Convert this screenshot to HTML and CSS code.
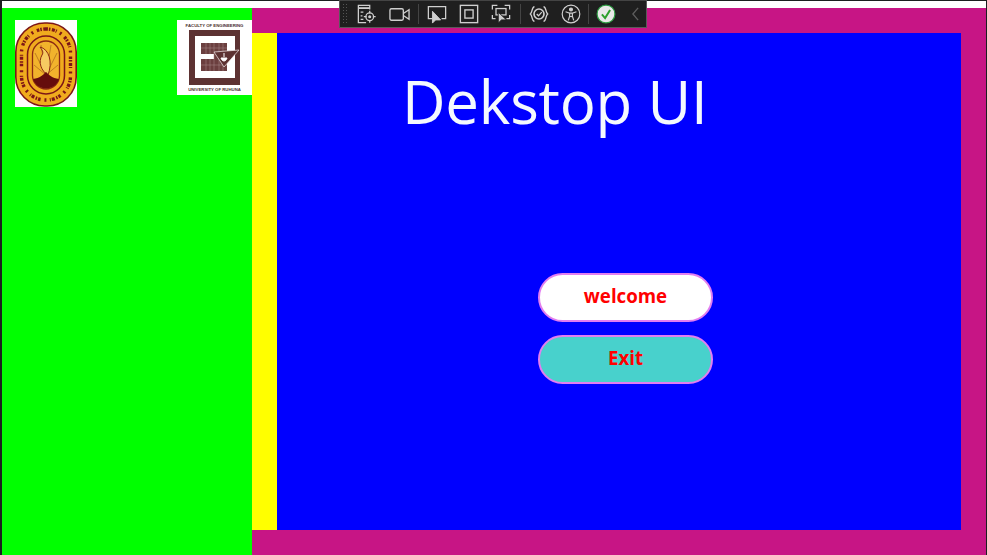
FILE: index.html
```html
<!DOCTYPE html>
<html lang="en">
<head>
<meta charset="utf-8">
<title>Dekstop UI</title>
<link rel="stylesheet" href="styles.css">
</head>
<body>
<div class="window">
  <div class="titlebar"></div>
  <div class="content">
    <aside class="sidebar">
      <svg class="logo seal" width="62" height="87" viewBox="0 0 62 87">
        <rect width="62" height="87" fill="#fff"/>
        <rect x="0.8" y="3" width="60.4" height="83" rx="29" fill="#f0ab1e" stroke="#7d1616" stroke-width="1.600"/>
        <rect x="6.500" y="9" width="49" height="71" rx="24" fill="none" stroke="#7d1616" stroke-width="3.400" stroke-dasharray="2.500 1 1.500 1.500 3 1 1 3.500 2 4"/>
        <rect x="12.500" y="16" width="37" height="58" rx="18.500" fill="#f0ab1e" stroke="#7d1616" stroke-width="1.500"/>
        <rect x="17.500" y="21" width="27" height="48" rx="13.500" fill="#f2b32c" stroke="#8d2a12" stroke-width="1.300"/>
        <path d="M31 55L20 33M31 55L26 25M31 55L36 25M31 55L42 33M31 55L19 45M31 55L43 45" stroke="#a8641b" stroke-width=".7" fill="none"/>
        <path d="M25 27C34 29 38 42 33 55C26 51 23 42 27 35C29 32 27 30 25 27Z" fill="#f6cb62" stroke="#8d2a12" stroke-width="1"/>
        <path d="M18 59C25 58 28 55 31 52C34 55 37 58 44 59C42 65 37 68.500 31 68.500C25 68.500 20 65 18 59Z" fill="#650c0c"/>
      </svg>
      <svg class="logo faculty" width="75" height="75" viewBox="0 0 75 75">
        <rect width="75" height="75" fill="#fff"/>
        <text x="37.500" y="7" class="logo-text">FACULTY OF ENGINEERING</text>
        <rect x="12" y="10" width="51" height="55" fill="#5d3232"/>
        <rect x="18" y="16" width="40" height="42" fill="#fff"/>
        <path d="M24 23H50V51H24V39H37V34H24Z" fill="#6b3f3f"/>
        <path d="M29 23V34M33 23V34M29 39V51M33 39V51M37 23V51M42 23V51M46 23V51M24 28H50M24 45H50" stroke="#a98a8a" stroke-width=".5"/>
        <path d="M37 32L62 30L47 47Z" fill="#5d3232" stroke="#f3e9e9" stroke-width=".7"/>
        <path d="M47 33V37M44 38C45 42 49 42 50 38Z" stroke="#fff" fill="#fff" stroke-width="1"/>
        <text x="37.500" y="71" class="logo-text">UNIVERSITY OF RUHUNA</text>
      </svg>
    </aside>
    <main class="stage">
      <div class="strip"></div>
      <section class="panel">
        <h1 class="title">Dekstop UI</h1>
        <div class="actions">
          <button class="pill pill-welcome" type="button">welcome</button>
          <button class="pill pill-exit" type="button">Exit</button>
        </div>
      </section>
    </main>
  </div>
</div>
<div class="devbar">
  <svg class="grip" width="6" height="22" viewBox="0 0 6 22"><path d="M1 1h1v1H1zM4 1h1v1H4zM1 4h1v1H1zM4 4h1v1H4zM1 7h1v1H1zM4 7h1v1H4zM1 10h1v1H1zM4 10h1v1H4zM1 13h1v1H1zM4 13h1v1H4zM1 16h1v1H1zM4 16h1v1H4zM1 19h1v1H1zM4 19h1v1H4z" fill="#555"/></svg>
  <svg class="ico first" viewBox="0 0 22 22" fill="none" stroke="#cfcfcf" stroke-width="1.400"><path d="M10 20.500H1.500V1.500H14V6"/><path d="M1.500 4.500H14" stroke-width="2"/><path d="M4 9h3M4 13h2M4 17h3"/><circle cx="14" cy="14" r="4.200"/><circle cx="14" cy="14" r="1" fill="#cfcfcf"/><path d="M14 7.500v3M14 17.500v3M7.500 14h3M17.500 14h3"/></svg>
  <svg class="ico cam" viewBox="0 0 22 22" fill="none" stroke="#cfcfcf" stroke-width="1.400"><rect x="1" y="5" width="14" height="12" rx="1.500"/><path d="M15 10l6-4v10l-6-4"/></svg>
  <span class="sep sep-a"></span>
  <svg class="ico after-sep" viewBox="0 0 22 22" fill="none" stroke="#cfcfcf" stroke-width="1.400"><path d="M6 16H1.500V3H20.500V16H16"/><path d="M6 8V21L9.500 17.500L15 17.500Z" fill="#cfcfcf" stroke="#cfcfcf" stroke-width="1"/></svg>
  <svg class="ico mid" viewBox="0 0 22 22" fill="none" stroke="#cfcfcf" stroke-width="1.500"><rect x="1.500" y="1.500" width="19" height="19"/><rect x="6.500" y="6.500" width="9" height="9"/></svg>
  <svg class="ico mid" viewBox="0 0 22 22" fill="none" stroke="#cfcfcf" stroke-width="1.400"><path d="M1.500 6V1.500H7M15 1.500H20.500V6M1.500 12V16H5M17 16H20.500V12"/><rect x="5.500" y="5" width="11" height="7"/><path d="M8 9V21L11.500 17.500L17 17.500Z" fill="#cfcfcf" stroke="#1f1f1f" stroke-width="1"/></svg>
  <span class="sep sep-b"></span>
  <svg class="ico after-sep" viewBox="0 0 22 22" fill="none" stroke="#cfcfcf" stroke-width="1.500"><path d="M6 3C3 3 4 9 1.500 11C4 13 3 19 6 19M16 3C19 3 18 9 20.500 11C18 13 19 19 16 19"/><circle cx="11" cy="11" r="5.500" stroke-width="1.800"/><path d="M8.500 11l2 2 3.500-4" stroke-width="1.400"/></svg>
  <svg class="ico mid" viewBox="0 0 22 22" fill="none" stroke="#cfcfcf" stroke-width="1.300"><circle cx="11" cy="11" r="9.700"/><circle cx="11" cy="6" r="1.600" fill="#cfcfcf"/><path d="M5 8.500L9.500 10V13.500L8 18M17 8.500L12.500 10V13.500L14 18M9.500 10H12.500V13.500L11 14L9.500 13.500" stroke-width="1.300"/></svg>
  <span class="sep sep-c"></span>
  <svg class="ico check" viewBox="0 0 22 22"><circle cx="11" cy="11" r="9.800" fill="#e9e9e9" stroke="#2f9e44" stroke-width="1.300"/><path d="M6.500 11.500L10 15.500L15.500 6.500" fill="none" stroke="#2ca02c" stroke-width="2.200"/></svg>
  <svg class="chev" width="7" height="16" viewBox="0 0 8 16" fill="none" stroke="#5e5e5e" stroke-width="1.500"><path d="M7 1L1 8L7 15"/></svg>
</div>
</body>
</html>
```
FILE: styles.css
```css
* { box-sizing: border-box; }
html, body { margin: 0; height: 100%; }
body { background: #1b1f1f; overflow: hidden; font-family: "Open Sans", "Noto Sans", sans-serif; }
.window { width: 987px; height: 555px; padding: 1px 1px 0 2px; display: flex; flex-direction: column; }
.titlebar { height: 7px; background: #fff; flex: none; }
.content { flex: 1; display: flex; min-height: 0; }
.sidebar { width: 250px; flex: none; background: #00ff00; padding: 12px 0 0 13px; display: flex; justify-content: space-between; align-items: flex-start; }
.logo { display: block; flex: none; }
.logo-text { font: 700 4.300px "Liberation Sans", sans-serif; fill: #4a3030; text-anchor: middle; }
.stage { flex: 1; background: #c71585; padding: 25px 25px 25px 0; display: flex; }
.strip { width: 25px; flex: none; background: #ffff00; }
.panel { flex: 1; background: #0000ff; position: relative; display: flex; flex-direction: column; }
.title { margin: 0; padding: 27px 0 0 125px; font-family: "Open Sans", sans-serif; font-weight: 400; font-size: 60px; letter-spacing: -0.2px; line-height: 83px; color: #f4f9ff; }
.actions { margin: 130px 0 0 261px; width: 175px; display: flex; flex-direction: column; gap: 13px; }
.pill { width: 175px; height: 49px; border-radius: 25px; border: 2.500px solid #e27ef0; padding: 0 0 4px; font-family: "Open Sans", sans-serif; font-weight: 700; font-size: 18.700px; color: #ff0000; }
.pill-welcome { background: #fff; }
.pill-exit { background: #48d1cc; }
.devbar { position: absolute; left: 339px; top: 0; width: 308px; height: 28px; background: #1f1f1f; border: 1px solid #5a5a5a; border-top-color: #444; display: flex; align-items: center; padding: 0 0 0 2px; }
.ico { display: block; flex: none; width: 20px; height: 20px; }
.grip { flex: none; }
.first { margin-left: 9px; }
.cam { margin-left: 12px; width: 21px; height: 21px; }
.sep { width: 1px; height: 20px; background: #444; flex: none; }
.sep-a { margin-left: 8px; }
.after-sep { margin-left: 8px; }
.mid { margin-left: 12px; }
.sep-b { margin-left: 9px; }
.sep-c { margin-left: 7px; }
.check { margin-left: 7px; }
.chev { flex: none; margin-left: 16px; }
```
